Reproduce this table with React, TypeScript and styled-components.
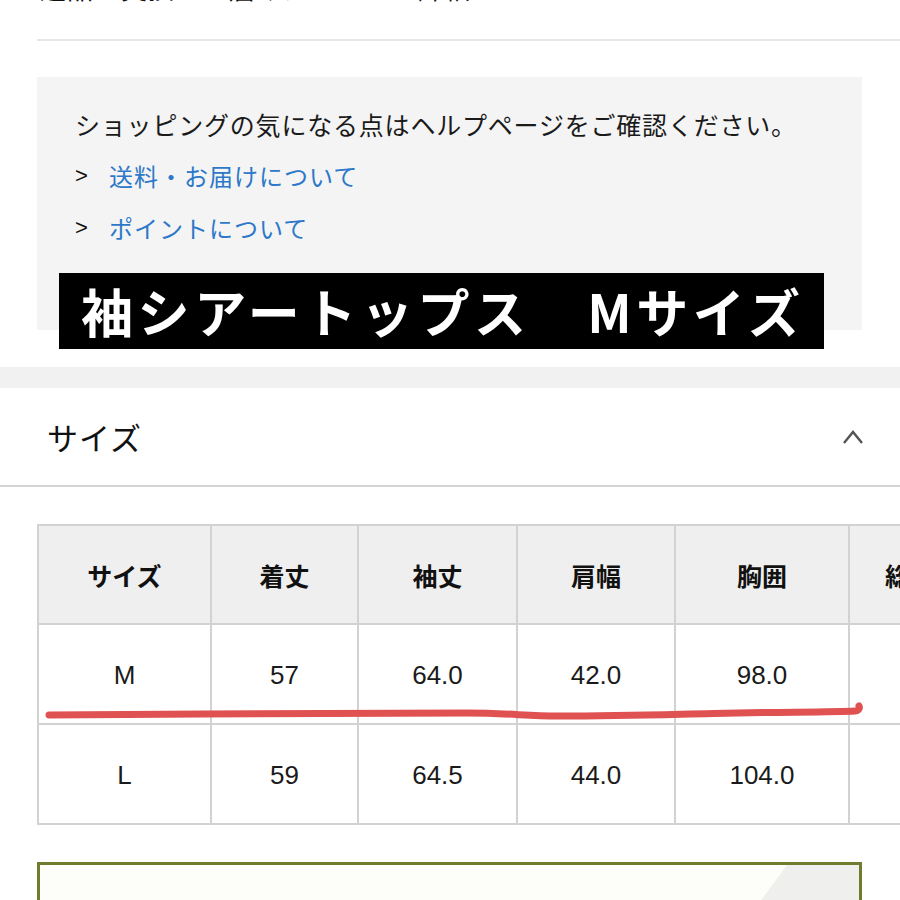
import React from 'react'
import styled, { createGlobalStyle } from 'styled-components'

const GlobalStyle = createGlobalStyle`
  html, body {
    margin: 0;
    padding: 0;
    background: #fff;
    overflow: hidden;
  }
  body {
    width: 900px;
    height: 900px;
    font-family: "Noto Sans CJK JP", "Noto Sans", sans-serif;
    color: #111;
  }
`

const Page = styled.div`
  width: 900px;
  height: 900px;
  overflow: hidden;
`

const ClippedTitle = styled.div`
  height: 39px;
  padding-left: 40px;
  overflow: hidden;
  font-size: 26px;
  line-height: 26px;
  & > span {
    display: block;
    margin-top: -25px;
    letter-spacing: 1px;
  }
`

const Divider = styled.div`
  margin-left: 37px;
  height: 2px;
  background: #e6e6e6;
`

const HelpWrap = styled.div`
  position: relative;
  margin: 36px 38px 0 37px;
`

const HelpBox = styled.div`
  background: #f4f4f4;
  height: 253px;
  padding: 27px 0 0 38px;
  box-sizing: border-box;
`

const HelpText = styled.p`
  margin: 0;
  font-size: 25px;
  line-height: 40px;
  letter-spacing: 0.8px;
  color: #1a1a1a;
`

const LinkRow = styled.div`
  display: flex;
  align-items: center;
  gap: 16px;
  margin-top: ${(p: { $top: number }) => p.$top}px;
  font-size: 24px;
  line-height: 34px;
`

const Caret = styled.span`
  font-family: "Liberation Sans", sans-serif;
  font-size: 22px;
  color: #111;
  width: 18px;
`

const HelpLink = styled.a`
  color: #2d78c8;
  text-decoration: none;
  letter-spacing: 1px;
`

const Banner = styled.div`
  position: absolute;
  left: 22px;
  top: 196px;
  width: 765px;
  height: 76px;
  background: #000;
  color: #fff;
  font-weight: 700;
  font-size: 52px;
  line-height: 76px;
  padding-left: 22px;
  box-sizing: border-box;
  white-space: pre;
  letter-spacing: 4.6px;
`

const Band = styled.div`
  margin-top: 37px;
  height: 21px;
  background: #f1f1f1;
`

const AccordionHead = styled.div`
  display: flex;
  align-items: center;
  justify-content: space-between;
  height: 97px;
  padding: 0 36px 0 47px;
  border-bottom: 2px solid #d4d4d4;
  font-size: 31px;
  letter-spacing: 1px;
`

const TableWrap = styled.div`
  position: relative;
  margin: 37px 0 0 37px;
  overflow: hidden;
`

const SizeTable = styled.table`
  border-collapse: collapse;
  table-layout: fixed;
  width: 933px;
  font-size: 26px;
`

const Th = styled.th`
  background: #efefef;
  border: 2px solid #d2d2d2;
  height: 97px;
  font-weight: 700;
  font-size: 25px;
  text-align: center;
  padding: 0;
  white-space: nowrap;
`

const Td = styled.td`
  border: 2px solid #d2d2d2;
  height: 96px;
  text-align: center;
  padding: 2px 0 0;
  font-family: "Liberation Sans", "Noto Sans CJK JP", sans-serif;
  font-size: 26px;
  color: #1a1a1a;
`

const Mark = styled.svg`
  position: absolute;
  left: 0;
  top: 0;
  pointer-events: none;
`

const NoticeBox = styled.div`
  position: relative;
  margin: 37px 38px 0 37px;
  height: 60px;
  border: 3px solid #6f7d2e;
  border-bottom: none;
  background: #fdfdf9;
  overflow: hidden;
`

const Sheen = styled.svg`
  position: absolute;
  right: 0;
  top: 0;
`

const cols = [173, 147, 159, 158, 174, 122]
const heads = ['サイズ', '着丈', '袖丈', '肩幅', '胸囲', '総丈']
const rows = [
  ['M', '57', '64.0', '42.0', '98.0', ''],
  ['L', '59', '64.5', '44.0', '104.0', ''],
]

export default function App() {
  return (
    <Page>
      <GlobalStyle />
      <ClippedTitle>
        <span>返品・交換・お届けについて　詳細</span>
      </ClippedTitle>
      <Divider />
      <HelpWrap>
        <HelpBox>
          <HelpText>ショッピングの気になる点はヘルプページをご確認ください。</HelpText>
          <LinkRow $top={15}>
            <Caret>&gt;</Caret>
            <HelpLink href="#">送料・お届けについて</HelpLink>
          </LinkRow>
          <LinkRow $top={18}>
            <Caret>&gt;</Caret>
            <HelpLink href="#">ポイントについて</HelpLink>
          </LinkRow>
        </HelpBox>
        <Banner>{'袖シアートップス　Mサイズ'}</Banner>
      </HelpWrap>
      <Band />
      <AccordionHead>
        <span>サイズ</span>
        <svg width="22" height="16" viewBox="0 0 22 16">
          <path d="M2 14 L11 3 L20 14" fill="none" stroke="#555" strokeWidth="2.4" />
        </svg>
      </AccordionHead>
      <TableWrap>
        <SizeTable>
          <colgroup>
            {cols.map((w, i) => (
              <col key={i} style={{ width: w }} />
            ))}
          </colgroup>
          <thead>
            <tr>
              {heads.map((h) => (
                <Th key={h}>{h}</Th>
              ))}
            </tr>
          </thead>
          <tbody>
            {rows.map((r) => (
              <tr key={r[0]}>
                {r.map((c, i) => (
                  <Td key={i}>{c}</Td>
                ))}
              </tr>
            ))}
          </tbody>
        </SizeTable>
        <Mark width="863" height="300">
          <path
            d="M12 191 C150 190 330 189 430 189 C470 189 490 192 520 192 C600 192 640 190 700 189 C760 188 800 188 818 187 C822 187 823 184 822 182"
            fill="none"
            stroke="#e05252"
            strokeWidth="7"
            strokeLinecap="round"
            strokeLinejoin="round"
          />
        </Mark>
      </TableWrap>
      <NoticeBox>
        <Sheen width="120" height="60">
          <polygon points="48,0 120,0 120,60 4,60" fill="#efefed" />
        </Sheen>
      </NoticeBox>
    </Page>
  )
}
